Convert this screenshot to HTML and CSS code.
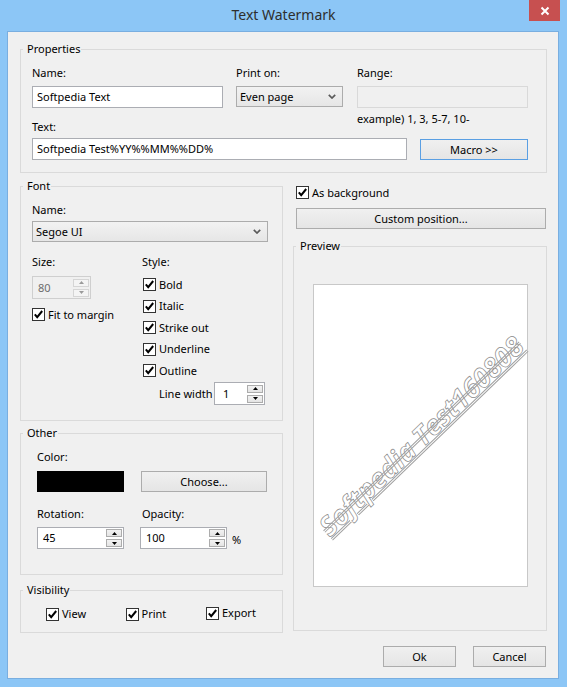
FILE: index.html
```html
<!DOCTYPE html>
<html>
<head>
<meta charset="utf-8">
<link rel="stylesheet" href="styles.css">
</head>
<body>
<div class="window">
  <div class="titlebar">
    <span class="title">Text Watermark</span>
    <div class="close"><svg width="10" height="10" viewBox="0 0 10 10"><path d="M1.5 1.5 L8.5 8.5 M8.5 1.5 L1.5 8.5" stroke="#fff" stroke-width="2"/></svg></div>
  </div>
  <div class="client">
    <fieldset class="grp props">
      <legend>Properties</legend>
      <div class="props-grid">
        <div class="lbl l-name">Name:</div>
        <div class="lbl l-print">Print on:</div>
        <div class="lbl l-range">Range:</div>
        <div class="input name-in">Softpedia Text</div>
        <div class="combo print-in"><span>Even page</span><svg width="8" height="5" viewBox="0 0 8 5"><path d="M0.8 0.8 L4 4 L7.2 0.8" fill="none" stroke="#5a5a5a" stroke-width="1.7"/></svg></div>
        <div class="input disabled range-in"></div>
        <div class="hint">example) 1, 3, 5-7, 10-</div>
        <div class="lbl l-text">Text:</div>
        <div class="input text-in">Softpedia Test%YY%%MM%%DD%</div>
        <button class="btn default macro">Macro &gt;&gt;</button>
      </div>
    </fieldset>

    <div class="main">
      <div class="left">
        <fieldset class="grp font">
          <legend>Font</legend>
          <div class="font-body">
            <div class="lbl">Name:</div>
            <div class="combo font-combo"><span>Segoe UI</span><svg width="8" height="5" viewBox="0 0 8 5"><path d="M0.8 0.8 L4 4 L7.2 0.8" fill="none" stroke="#5a5a5a" stroke-width="1.7"/></svg></div>
            <div class="font-row">
              <div class="col-a">
                <div class="lbl">Size:</div>
                <div class="spin disabled size-spin">
                  <span class="val">80</span>
                  <div class="spin-btns">
                    <div class="sb"><svg width="5" height="3" viewBox="0 0 5 3"><path d="M0 3 L2.5 0 L5 3Z"/></svg></div>
                    <div class="sb"><svg width="5" height="3" viewBox="0 0 5 3"><path d="M0 0 L2.5 3 L5 0Z"/></svg></div>
                  </div>
                </div>
                <div class="check-row fit">
                  <svg class="cb" width="13" height="13" viewBox="0 0 13 13"><rect x="0.5" y="0.5" width="12" height="12" fill="#fff" stroke="#333"/><path d="M2.8 6.3 L5.2 9.2 L10.2 3" fill="none" stroke="#000" stroke-width="2"/></svg>
                  <span>Fit to margin</span>
                </div>
              </div>
              <div class="col-b">
                <div class="lbl">Style:</div>
                <div class="checks">
                  <div class="check-row style-row"><svg class="cb" width="13" height="13" viewBox="0 0 13 13"><rect x="0.5" y="0.5" width="12" height="12" fill="#fff" stroke="#333"/><path d="M2.8 6.3 L5.2 9.2 L10.2 3" fill="none" stroke="#000" stroke-width="2"/></svg><span>Bold</span></div>
                  <div class="check-row style-row"><svg class="cb" width="13" height="13" viewBox="0 0 13 13"><rect x="0.5" y="0.5" width="12" height="12" fill="#fff" stroke="#333"/><path d="M2.8 6.3 L5.2 9.2 L10.2 3" fill="none" stroke="#000" stroke-width="2"/></svg><span>Italic</span></div>
                  <div class="check-row style-row"><svg class="cb" width="13" height="13" viewBox="0 0 13 13"><rect x="0.5" y="0.5" width="12" height="12" fill="#fff" stroke="#333"/><path d="M2.8 6.3 L5.2 9.2 L10.2 3" fill="none" stroke="#000" stroke-width="2"/></svg><span>Strike out</span></div>
                  <div class="check-row style-row"><svg class="cb" width="13" height="13" viewBox="0 0 13 13"><rect x="0.5" y="0.5" width="12" height="12" fill="#fff" stroke="#333"/><path d="M2.8 6.3 L5.2 9.2 L10.2 3" fill="none" stroke="#000" stroke-width="2"/></svg><span>Underline</span></div>
                  <div class="check-row style-row"><svg class="cb" width="13" height="13" viewBox="0 0 13 13"><rect x="0.5" y="0.5" width="12" height="12" fill="#fff" stroke="#333"/><path d="M2.8 6.3 L5.2 9.2 L10.2 3" fill="none" stroke="#000" stroke-width="2"/></svg><span>Outline</span></div>
                </div>
                <div class="lw-row">
                  <span class="lw-lbl">Line width</span>
                  <div class="spin lw-spin">
                    <span class="val">1</span>
                    <div class="spin-btns">
                      <div class="sb"><svg width="5" height="3" viewBox="0 0 5 3"><path d="M0 3 L2.5 0 L5 3Z"/></svg></div>
                      <div class="sb"><svg width="5" height="3" viewBox="0 0 5 3"><path d="M0 0 L2.5 3 L5 0Z"/></svg></div>
                    </div>
                  </div>
                </div>
              </div>
            </div>
          </div>
        </fieldset>

        <fieldset class="grp other">
          <legend>Other</legend>
          <div class="other-body">
            <div class="lbl">Color:</div>
            <div class="other-grid color-row">
              <div class="swatch"></div>
              <button class="btn choose">Choose...</button>
            </div>
            <div class="other-grid lbl-row">
              <div class="lbl">Rotation:</div>
              <div class="lbl op-lbl">Opacity:</div>
            </div>
            <div class="other-grid spin-row">
              <div class="spin num-spin">
                <span class="val">45</span>
                <div class="spin-btns">
                  <div class="sb"><svg width="5" height="3" viewBox="0 0 5 3"><path d="M0 3 L2.5 0 L5 3Z"/></svg></div>
                  <div class="sb"><svg width="5" height="3" viewBox="0 0 5 3"><path d="M0 0 L2.5 3 L5 0Z"/></svg></div>
                </div>
              </div>
              <div class="op-cell">
                <div class="spin num-spin">
                  <span class="val">100</span>
                  <div class="spin-btns">
                    <div class="sb"><svg width="5" height="3" viewBox="0 0 5 3"><path d="M0 3 L2.5 0 L5 3Z"/></svg></div>
                    <div class="sb"><svg width="5" height="3" viewBox="0 0 5 3"><path d="M0 0 L2.5 3 L5 0Z"/></svg></div>
                  </div>
                </div>
                <span class="pct">%</span>
              </div>
            </div>
          </div>
        </fieldset>

        <fieldset class="grp vis">
          <legend>Visibility</legend>
          <div class="vis-body">
            <div class="check-row"><svg class="cb" width="13" height="13" viewBox="0 0 13 13"><rect x="0.5" y="0.5" width="12" height="12" fill="#fff" stroke="#333"/><path d="M2.8 6.3 L5.2 9.2 L10.2 3" fill="none" stroke="#000" stroke-width="2"/></svg><span>View</span></div>
            <div class="check-row"><svg class="cb" width="13" height="13" viewBox="0 0 13 13"><rect x="0.5" y="0.5" width="12" height="12" fill="#fff" stroke="#333"/><path d="M2.8 6.3 L5.2 9.2 L10.2 3" fill="none" stroke="#000" stroke-width="2"/></svg><span>Print</span></div>
            <div class="check-row export"><svg class="cb" width="13" height="13" viewBox="0 0 13 13"><rect x="0.5" y="0.5" width="12" height="12" fill="#fff" stroke="#333"/><path d="M2.8 6.3 L5.2 9.2 L10.2 3" fill="none" stroke="#000" stroke-width="2"/></svg><span>Export</span></div>
          </div>
        </fieldset>
      </div>

      <div class="right">
        <div class="check-row bg-row"><svg class="cb" width="13" height="13" viewBox="0 0 13 13"><rect x="0.5" y="0.5" width="12" height="12" fill="#fff" stroke="#333"/><path d="M2.8 6.3 L5.2 9.2 L10.2 3" fill="none" stroke="#000" stroke-width="2"/></svg><span>As background</span></div>
        <button class="btn custom">Custom position...</button>
        <fieldset class="grp preview">
          <legend>Preview</legend>
          <div class="page"><span class="wm">Softpedia Test160808</span></div>
        </fieldset>
      </div>
    </div>

    <div class="actions">
      <button class="btn act">Ok</button>
      <button class="btn act">Cancel</button>
    </div>
  </div>
</div>
</body>
</html>
```

FILE: styles.css
```css
* { box-sizing: border-box; }

body {
  margin: 0;
  background: #8cc6f6;
  font-family: "Noto Sans", "Open Sans", sans-serif;
  font-size: 11px;
  line-height: 16px;
  color: #000;
}

.window {
  width: 567px;
  height: 687px;
  background: #8cc6f6;
  display: flex;
  flex-direction: column;
}

.titlebar {
  position: relative;
  height: 31px;
  display: flex;
  align-items: center;
  justify-content: center;
}

.title {
  font-size: 14px;
  color: #2e2e2e;
  margin-top: -1px;
}

.close {
  position: absolute;
  top: 0;
  right: 7px;
  width: 31px;
  height: 21px;
  background: #c75050;
  display: flex;
  align-items: center;
  justify-content: center;
}

.client {
  margin: 0 8px 8px 7px;
  height: 648px;
  background: #f0f0f0;
  border: 1px solid #79aee0;
  padding: 9px 11px 0 12px;
}

/* group boxes */
.grp {
  margin: 0;
  padding: 0;
  border: 1px solid #dadada;
  min-width: 0;
}

.grp legend {
  margin-left: 2px;
  padding: 0 1px 0 4px;
  line-height: 16px;
}

.lbl { line-height: 16px; }

/* inputs */
.input {
  background: #fff;
  border: 1px solid #abadb3;
  height: 22px;
  padding: 0 4px;
  display: flex;
  align-items: center;
}

.input.disabled {
  background: #f0f0f0;
  border-color: #d9d9d9;
}

.combo {
  height: 21px;
  border: 1px solid #acacac;
  background: linear-gradient(#f2f2f2, #e6e6e6);
  display: flex;
  align-items: center;
  justify-content: space-between;
  padding: 0 6px 0 3px;
}

.btn {
  font: inherit;
  color: #000;
  height: 21px;
  padding: 0;
  border: 1px solid #acacac;
  background: linear-gradient(#f0f0f0, #e5e5e5);
}

.btn.default { border-color: #5a9fe3; }

/* spin boxes */
.spin {
  background: #fff;
  border: 1px solid #abadb3;
  display: flex;
  align-items: center;
  padding-left: 5px;
}

.spin .val { flex: 1; }

.spin-btns {
  display: flex;
  flex-direction: column;
  gap: 2px;
  padding: 1px 1px 1px 0;
  align-self: stretch;
  justify-content: center;
}

.sb {
  width: 16px;
  height: 8px;
  border: 1px solid #acacac;
  background: linear-gradient(#f2f2f2, #e4e4e4);
  display: flex;
  align-items: center;
  justify-content: center;
}

.sb svg path { fill: #000; }

.spin.disabled {
  background: #f0f0f0;
  border-color: #cfcfcf;
  color: #6d6d6d;
}

.spin.disabled .sb {
  border-color: #d5d5d5;
  background: #f4f4f4;
}

.spin.disabled .sb svg path { fill: #9a9a9a; }

/* checkboxes */
.check-row {
  display: flex;
  align-items: center;
  height: 16px;
  gap: 3px;
}

.cb { flex: none; display: block; }

/* properties */
.props {
  padding-top: 8px;
  padding-bottom: 12px;
}

.props-grid {
  margin-left: 11px;
  display: grid;
  grid-template-columns: 191px 13px 107px 14px 50px 13px 108px;
  grid-template-rows: 21px 22px 30px 22px;
}

.l-name { grid-column: 1; grid-row: 1; align-self: start; }
.l-print { grid-column: 3; grid-row: 1; align-self: start; }
.l-range { grid-column: 5 / 8; grid-row: 1; align-self: start; }
.name-in { grid-column: 1; grid-row: 2; }
.print-in { grid-column: 3; grid-row: 2; align-self: start; }
.range-in { grid-column: 5 / 8; grid-row: 2; }
.hint { grid-column: 5 / 8; grid-row: 3; align-self: start; margin-top: 3px; }
.l-text { grid-column: 1; grid-row: 3; align-self: end; margin-bottom: 3px; }
.text-in { grid-column: 1 / 6; grid-row: 4; }
.macro { grid-column: 7; grid-row: 4; align-self: start; margin-top: 1px; }

/* main area */
.main {
  display: grid;
  grid-template-columns: 263px 254px;
  column-gap: 10px;
}

.left, .right {
  display: flex;
  flex-direction: column;
}

/* font */
.font {
  margin-top: 5px;
  padding-top: 8px;
  padding-bottom: 15px;
}

.font-body { padding-left: 11px; }

.font-combo {
  width: 236px;
  margin-top: 3px;
}

.font-row {
  margin-top: 12px;
  display: grid;
  grid-template-columns: 110px 1fr;
}

.size-spin {
  width: 59px;
  height: 23px;
  margin-top: 6px;
}

.fit { margin-top: 7.5px; }

.checks { margin-top: 3.75px; }

.style-row {
  height: 21.5px;
  padding-left: 1px;
}

.lw-row {
  margin-top: 0.75px;
  display: grid;
  grid-template-columns: 72px 51px;
  align-items: center;
}

.lw-lbl { padding-left: 17px; }

.lw-spin { height: 23px; padding-left: 8px; }

/* other */
.other {
  margin-top: 4px;
  padding-top: 8px;
  padding-bottom: 25px;
}

.other-body { padding-left: 16px; }

.other-grid {
  display: grid;
  grid-template-columns: 104px 126px;
}

.color-row { margin-top: 6px; height: 21px; }

.swatch {
  width: 87px;
  height: 21px;
  background: #000;
}

.lbl-row { margin-top: 14px; }

.op-lbl { padding-left: 1px; }

.spin-row { margin-top: 5px; }

.num-spin { width: 87px; height: 22px; }

.op-cell {
  display: flex;
  align-items: center;
  margin-left: -1px;
}

.pct { margin-left: 5px; margin-top: 3px; }

/* visibility */
.vis {
  margin-top: 7px;
  padding-top: 8px;
  padding-bottom: 10px;
}

.vis-body {
  padding-left: 25px;
  display: grid;
  grid-template-columns: 79.5px 80.5px auto;
}

.export { margin-top: -1px; }

/* right column */
.bg-row {
  margin-top: 11.5px;
  margin-left: 3px;
}

.custom {
  margin: 7.5px 1px 0 3px;
}

.preview {
  margin-top: 9px;
  padding-top: 30px;
  padding-bottom: 43px;
}

.page {
  margin: 0 18px 0 19px;
  height: 303px;
  background: #fff;
  border: 1px solid #c8c8c8;
  display: flex;
  align-items: center;
  justify-content: center;
}

.wm {
  flex: none;
  transform: rotate(-44deg);
  font-family: "Open Sans", "Noto Sans", sans-serif;
  font-style: italic;
  font-weight: 700;
  font-size: 27px;
  line-height: 32px;
  white-space: nowrap;
  color: #fff;
  -webkit-text-stroke: 0.7px #8a8a8a;
  text-decoration-line: underline line-through;
  text-decoration-style: double;
  text-decoration-color: #a0a0a0;
  text-decoration-thickness: 1px;
}

/* bottom buttons */
.actions {
  margin-top: 13px;
  display: flex;
  justify-content: flex-end;
  gap: 17px;
  padding-right: 1px;
}

.act { width: 73px; }
```
